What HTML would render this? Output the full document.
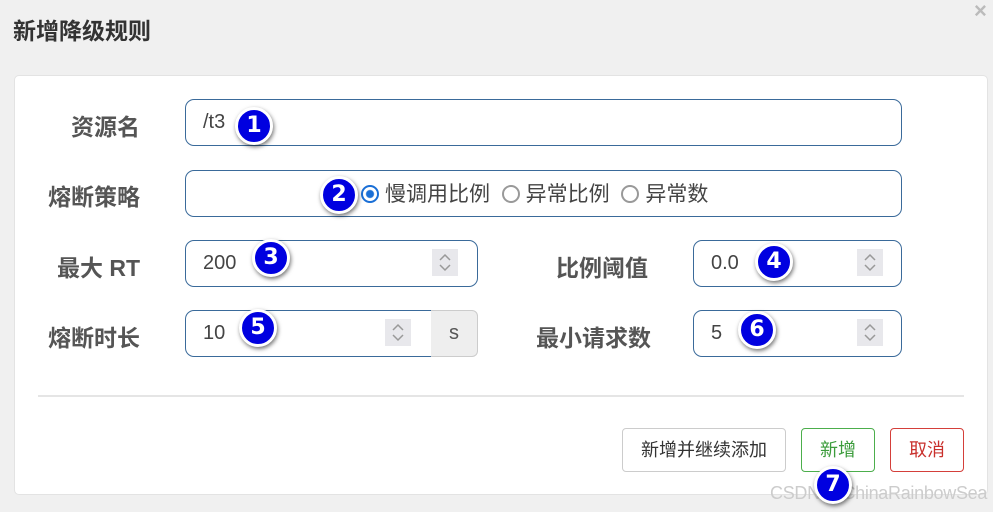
<!DOCTYPE html>
<html><head><meta charset="utf-8"><style>
*{box-sizing:border-box;margin:0;padding:0}
body{width:993px;height:512px;background:#f0f0f0;position:relative;overflow:hidden;font-family:"Liberation Sans","Noto Sans CJK SC",sans-serif;color:#555}
.a{position:absolute}
.title{left:13px;top:12px;font-size:23px;font-weight:bold;color:#333}
.close{left:974px;top:-2px;font-size:22px;color:#bbb;font-weight:bold}
.panel{left:14px;top:75px;width:974px;height:420px;background:#fff;border:1px solid #e3e3e3;border-radius:5px}
.lbl{font-size:23px;font-weight:bold;color:#555;text-align:right;line-height:46px;height:46px;white-space:nowrap}
.inp{border:1px solid #3a6a9a;border-radius:9px;background:#fff;height:47px;font-size:20px;color:#444;line-height:45px;padding-left:17px}
.spin{width:26px;height:27px;background:#e8e8ec;top:9px}
.spin svg{display:block}
.badge{width:38px;height:38px;border-radius:50%;background:#0000e0;border:3px solid #fff;box-shadow:1px 2px 4px rgba(0,0,0,.55);color:#fff;font-weight:bold;font-size:22px;text-align:center;line-height:32px;font-family:"DejaVu Sans","Liberation Sans",sans-serif}
.btn{height:44px;border-radius:4px;font-size:18px;text-align:center;line-height:42px;background:#fff}
.radio{display:inline-block;width:18px;height:18px;border-radius:50%;border:2px solid #999;vertical-align:-2px;margin-right:6px}
</style></head><body>
<div class="a title">新增降级规则</div>
<div class="a close">×</div>
<div class="a panel"></div>

<div class="a lbl" style="left:20px;top:104px;width:120px">资源名</div>
<div class="a inp" style="left:185px;top:99px;width:717px">/t3</div>

<div class="a lbl" style="left:20px;top:174px;width:120px">熔断策略</div>
<div class="a inp" style="left:185px;top:170px;width:717px;padding-left:175px;font-size:21px;line-height:47px;white-space:nowrap">
<span class="radio" style="border-color:#1a6fd6;background:radial-gradient(circle,#1a6fd6 0 3.5px,#fff 4.5px)"></span>慢调用比例&nbsp;&nbsp;<span class="radio"></span>异常比例&nbsp;&nbsp;<span class="radio"></span>异常数</div>

<div class="a lbl" style="left:20px;top:245px;width:120px">最大 RT</div>
<div class="a inp" style="left:185px;top:240px;width:293px">200</div>
<div class="a spin" style="left:432px;top:249px"><svg width="26" height="27"><path d="M8 11l5-5 5 5M8 16l5 5 5-5" fill="none" stroke="#999" stroke-width="1.5"/></svg></div>

<div class="a lbl" style="left:500px;top:245px;width:148px">比例阈值</div>
<div class="a inp" style="left:693px;top:240px;width:209px">0.0</div>
<div class="a spin" style="left:857px;top:249px"><svg width="26" height="27"><path d="M8 11l5-5 5 5M8 16l5 5 5-5" fill="none" stroke="#999" stroke-width="1.5"/></svg></div>

<div class="a lbl" style="left:20px;top:315px;width:120px">熔断时长</div>
<div class="a inp" style="left:185px;top:310px;width:247px;border-radius:9px 0 0 9px">10</div>
<div class="a" style="left:431px;top:310px;width:47px;height:47px;background:#eeeeee;border:1px solid #ccc;border-left:none;border-radius:0 6px 6px 0;text-align:center;line-height:45px;font-size:20px;color:#555">s</div>
<div class="a spin" style="left:385px;top:319px"><svg width="26" height="27"><path d="M8 11l5-5 5 5M8 16l5 5 5-5" fill="none" stroke="#999" stroke-width="1.5"/></svg></div>

<div class="a lbl" style="left:500px;top:315px;width:151px">最小请求数</div>
<div class="a inp" style="left:693px;top:310px;width:209px">5</div>
<div class="a spin" style="left:857px;top:319px"><svg width="26" height="27"><path d="M8 11l5-5 5 5M8 16l5 5 5-5" fill="none" stroke="#999" stroke-width="1.5"/></svg></div>

<div class="a" style="left:38px;top:395px;width:926px;height:2px;background:#e5e5e5"></div>

<div class="a btn" style="left:622px;top:428px;width:164px;border:1px solid #ccc;color:#333">新增并继续添加</div>
<div class="a btn" style="left:801px;top:428px;width:74px;border:1px solid #4cae4c;color:#3c9c3c">新增</div>
<div class="a btn" style="left:890px;top:428px;width:74px;border:1px solid #d43f3a;color:#c9302c">取消</div>

<div class="a" style="left:770px;top:483px;font-size:18px;color:#ccc;white-space:nowrap;letter-spacing:-0.3px">CSDN @ChinaRainbowSea</div>

<div class="a badge" style="left:235px;top:107px">1</div>
<div class="a badge" style="left:320px;top:176px">2</div>
<div class="a badge" style="left:252px;top:239px">3</div>
<div class="a badge" style="left:755px;top:243px">4</div>
<div class="a badge" style="left:239px;top:309px">5</div>
<div class="a badge" style="left:738px;top:311px">6</div>
<div class="a badge" style="left:814px;top:466px">7</div>
</body></html>
